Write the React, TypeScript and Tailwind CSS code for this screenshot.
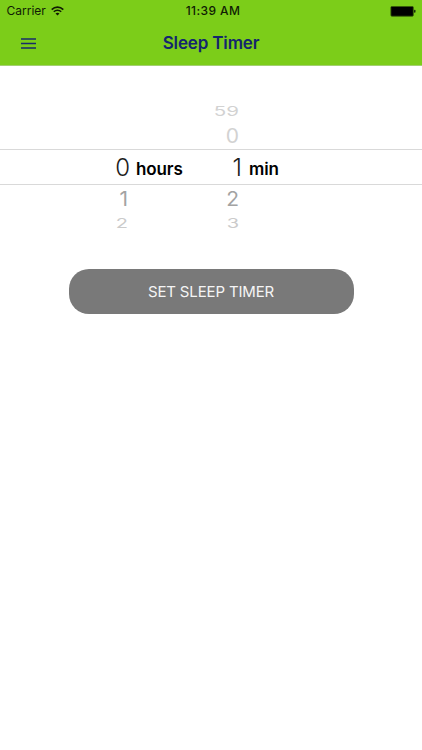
import React from "react";

type Row = { hour: string; minute: string; row: string; digit: string };

const before: Row[] = [
  { hour: "", minute: "59", row: "h-[25px]", digit: "text-[20.5px] scale-y-[0.66] text-[#d2d2d2]" },
  { hour: "", minute: "0", row: "h-[25px]", digit: "text-[21px] scale-y-[0.93] text-[#d2d2d2]" },
];

const after: Row[] = [
  { hour: "1", minute: "2", row: "h-[27px] pt-[2px]", digit: "text-[21px] scale-y-[0.93] text-[#a3a3a3]" },
  { hour: "2", minute: "3", row: "h-[22px] pt-[2px]", digit: "text-[20px] scale-y-[0.64] text-[#cbcbcb]" },
];

function WheelRow({ hour, minute, row, digit }: Row) {
  return (
    <div className={`flex items-center ${row}`}>
      <span className={`w-[128px] text-right leading-none ${digit}`}>{hour}</span>
      <span className={`w-[111px] text-right leading-none ${digit}`}>{minute}</span>
    </div>
  );
}

function WifiIcon() {
  return (
    <svg width="13" height="10" viewBox="0 0 13 10" fill="none" stroke="#101c04" strokeWidth="1.6">
      <path d="M0.7 3.6C4 .3 9 .3 12.3 3.6" />
      <path d="M2.8 5.8c2.1-2.1 5.3-2.1 7.4 0" />
      <path d="M6.5 9.5 4.5 7.5c1.2-1.1 2.8-1.1 4 0z" fill="#101c04" stroke="none" />
    </svg>
  );
}

function MenuIcon() {
  return (
    <svg width="15" height="11" viewBox="0 0 15 11" stroke="#182c6a" strokeWidth="1.3">
      <path d="M0 1h15M0 5.5h15M0 10h15" />
    </svg>
  );
}

function BatteryIcon() {
  return (
    <svg width="26" height="11" viewBox="0 0 26 11">
      <rect x="0.9" y="0.4" width="22.4" height="9.8" rx="1" fill="#000" stroke="#35590a" strokeWidth="0.8" />
      <rect x="24" y="3.8" width="1.5" height="3" rx="0.7" fill="#17280a" />
    </svg>
  );
}

export default function App() {
  return (
    <div className="h-[750px] w-full overflow-hidden bg-white font-['Inter','Liberation_Sans',sans-serif]">
      <header className="h-[66px] border-b border-[#a3cf70] bg-[#7ccd19]">
        <div className="grid h-[22px] grid-cols-3 items-center">
          <div className="flex items-center gap-[5px] pl-[6.5px] text-[12px] leading-[22px] text-[#101c04]">
            <span>Carrier</span>
            <WifiIcon />
          </div>
          <div className="pl-[4px] text-center text-[12px] font-medium leading-[22px] tracking-[0.4px] text-[#101c04]">11:39 AM</div>
          <div className="flex justify-end pr-[6px]">
            <BatteryIcon />
          </div>
        </div>
        <div className="grid h-[43px] grid-cols-[60px_1fr_60px] items-center">
          <button aria-label="Menu" className="ml-[21px] w-[15px]">
            <MenuIcon />
          </button>
          <h1 className="text-center text-[17px] font-semibold leading-none tracking-[-0.15px] text-[#14266e]">Sleep Timer</h1>
        </div>
      </header>

      <main className="pt-[33px]">
        {before.map((r) => (
          <WheelRow key={r.minute} {...r} />
        ))}
        <div className="flex h-[36px] items-center border-y border-[#d9d9d9] text-black">
          <span className="w-[130px] pt-[2px] text-right text-[24px] font-light leading-none text-[#1c1c1c]">0</span>
          <span className="w-[52px] pl-[6px] pt-[4px] text-[17px] font-semibold leading-none tracking-[-0.1px]">hours</span>
          <span className="w-[60px] pt-[2px] text-right text-[24px] font-light leading-none text-[#1c1c1c]">1</span>
          <span className="pl-[7px] pt-[4px] text-[17px] font-semibold leading-none tracking-[-0.1px]">min</span>
        </div>
        {after.map((r) => (
          <WheelRow key={r.minute} {...r} />
        ))}
        <button className="mx-auto mt-[35px] flex h-[45px] w-[285px] items-center justify-center rounded-[20px] bg-[#797979] pt-[2px] text-[15px] tracking-[-0.15px] text-[#f5f5f5]">
          SET SLEEP TIMER
        </button>
      </main>
    </div>
  );
}
